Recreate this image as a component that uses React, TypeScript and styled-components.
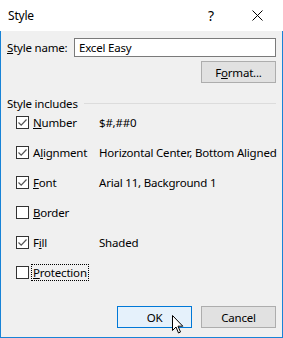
import React from 'react'
import styled, { createGlobalStyle } from 'styled-components'

const GlobalStyle = createGlobalStyle`
  html, body {
    margin: 0;
    padding: 0;
    background: #f0f0f0;
  }
  body {
    font-family: 'Noto Sans', 'Segoe UI', sans-serif;
    font-size: 11.5px;
    letter-spacing: -0.2px;
    color: #000;
  }
`

const Window = styled.div`
  width: 283px;
  height: 338px;
  box-sizing: border-box;
  border: 1px solid #1883d7;
  border-top: none;
  background: #f0f0f0;
  display: flex;
  flex-direction: column;
  position: relative;
`

const TitleBar = styled.div`
  height: 31px;
  background: #fff;
  display: flex;
  align-items: center;
  padding-left: 8px;
  padding-right: 3px;
  margin: 0 -1px;
`

const Title = styled.div`
  flex: 1;
  font-size: 12px;
`

const TitleButton = styled.div`
  width: 46px;
  height: 31px;
  display: flex;
  align-items: center;
  justify-content: center;
  font-size: 14px;
`

const Body = styled.div`
  flex: 1;
  padding: 7px 6px 0 6px;
  display: flex;
  flex-direction: column;
`

const NameRow = styled.div`
  display: flex;
  align-items: center;
  height: 19px;
`

const Label = styled.label`
  width: 67px;
`

const TextInput = styled.div`
  flex: 1;
  height: 19px;
  box-sizing: border-box;
  border: 1px solid #7a7a7a;
  background: #fff;
  padding: 0 4px;
  display: flex;
  align-items: center;
`

const Button = styled.div<{ $primary?: boolean }>`
  width: 75px;
  height: 22px;
  box-sizing: border-box;
  border: 1px solid ${(p) => (p.$primary ? '#0078d7' : '#adadad')};
  background: ${(p) => (p.$primary ? '#e5f1fb' : '#e1e1e1')};
  display: flex;
  align-items: center;
  justify-content: center;
`

const FormatRow = styled.div`
  display: flex;
  justify-content: flex-end;
  margin-top: 4px;
`

const GroupHeader = styled.div`
  display: flex;
  align-items: center;
  height: 15px;
  margin-top: 13px;
  gap: 6px;
`

const GroupLine = styled.div`
  flex: 1;
  height: 1px;
  background: #dcdcdc;
`

const Options = styled.div`
  display: grid;
  grid-template-columns: 83px 1fr;
  grid-auto-rows: 18px;
  row-gap: 12px;
  margin-top: 2px;
  padding-left: 9px;
`

const OptionCell = styled.div`
  display: flex;
  align-items: center;
  gap: 3px;
`

const Box = styled.div`
  width: 13px;
  height: 13px;
  box-sizing: border-box;
  border: 1px solid #333;
  background: #fff;
  display: flex;
  align-items: center;
  justify-content: center;
`

const OptionLabel = styled.span<{ $focused?: boolean }>`
  padding: 0 1px;
  outline: ${(p) => (p.$focused ? '1px dotted #000' : 'none')};
  line-height: 15px;
`

const Value = styled.div`
  display: flex;
  align-items: center;
  white-space: nowrap;
`

const Footer = styled.div`
  margin-top: auto;
  margin-bottom: 9px;
  display: flex;
  justify-content: flex-end;
  gap: 9px;
`

const Cursor = styled.svg`
  position: absolute;
  left: 171px;
  top: 315px;
`

const Check = () => (
  <svg width="11" height="11" viewBox="0 0 11 11">
    <path d="M1.5 5.5 L4.2 8.2 L9.5 2.5" fill="none" stroke="#555" strokeWidth="1.2" />
  </svg>
)

const options = [
  { key: 'N', rest: 'umber', checked: true, value: '$#,##0' },
  { key: '', label: 'A', keyMid: 'l', rest: 'ignment', checked: true, value: 'Horizontal Center, Bottom Aligned' },
  { key: 'F', rest: 'ont', checked: true, value: 'Arial 11, Background 1' },
  { key: 'B', rest: 'order', checked: false, value: '' },
  { key: '', label: 'F', keyMid: 'i', rest: 'll', checked: true, value: 'Shaded' },
  { key: 'P', rest: 'rotection', checked: false, value: '', focused: true },
]

const App: React.FC = () => {
  return (
    <>
      <GlobalStyle />
      <Window>
        <TitleBar>
          <Title>Style</Title>
          <TitleButton>?</TitleButton>
          <TitleButton>
            <svg width="11" height="11" viewBox="0 0 11 11">
              <path d="M0.5 0.5 L10.5 10.5 M10.5 0.5 L0.5 10.5" stroke="#000" strokeWidth="1" />
            </svg>
          </TitleButton>
        </TitleBar>
        <Body>
          <NameRow>
            <Label>
              <u>S</u>tyle name:
            </Label>
            <TextInput>Excel Easy</TextInput>
          </NameRow>
          <FormatRow>
            <Button>
              <span>
                F<u>o</u>rmat...
              </span>
            </Button>
          </FormatRow>
          <GroupHeader>
            <span>Style includes</span>
            <GroupLine />
          </GroupHeader>
          <Options>
            {options.map((o, i) => (
              <React.Fragment key={i}>
                <OptionCell>
                  <Box>{o.checked && <Check />}</Box>
                  <OptionLabel $focused={o.focused}>
                    {o.key ? <u>{o.key}</u> : null}
                    {o.label}
                    {o.keyMid ? <u>{o.keyMid}</u> : null}
                    {o.rest}
                  </OptionLabel>
                </OptionCell>
                <Value>{o.value}</Value>
              </React.Fragment>
            ))}
          </Options>
          <Footer>
            <Button $primary>OK</Button>
            <Button>Cancel</Button>
          </Footer>
        </Body>
        <Cursor width="12" height="19" viewBox="0 0 12 19">
          <path
            d="M0.5 0.5 L0.5 15.5 L4 12 L6.5 18 L8.5 17 L6 11.2 L10.8 11.2 Z"
            fill="#fff"
            stroke="#000"
            strokeWidth="1"
            strokeLinejoin="round"
          />
        </Cursor>
      </Window>
    </>
  )
}

export default App
